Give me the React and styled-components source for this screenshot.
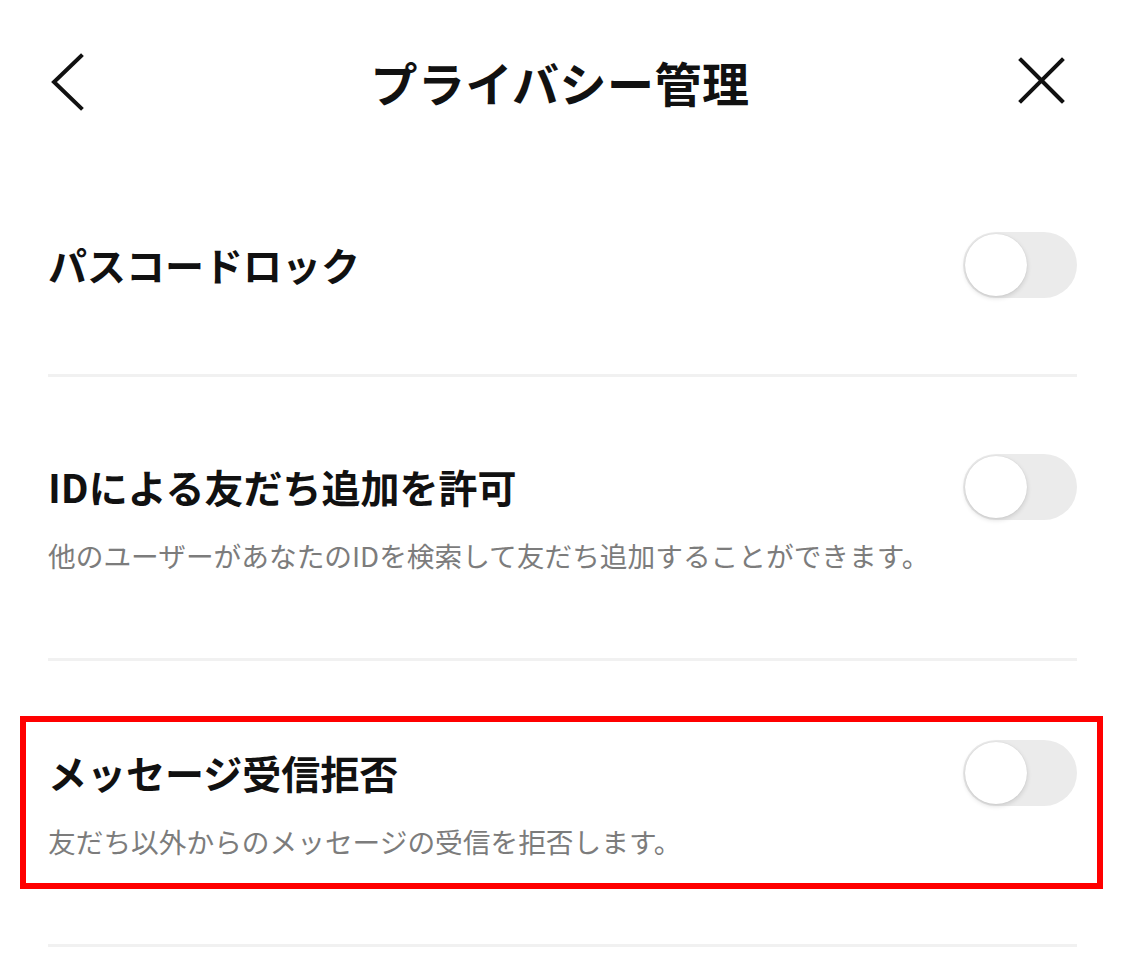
import styled, { createGlobalStyle } from 'styled-components';

const GlobalStyle = createGlobalStyle`
  html, body {
    margin: 0;
    padding: 0;
    background: #ffffff;
  }
  body {
    font-family: "Noto Sans CJK JP", "Noto Sans", sans-serif;
    color: #111111;
  }
`

const settings = [
  { id: 'passcode', title: 'パスコードロック', padTop: 83 },
  {
    id: 'friend-id',
    title: 'IDによる友だち追加を許可',
    desc: '他のユーザーがあなたのIDを検索して友だち追加することができます。',
    padTop: 83,
  },
  {
    id: 'reject',
    title: 'メッセージ受信拒否',
    desc: '友だち以外からのメッセージの受信を拒否します。',
    padTop: 55,
    highlight: true,
  },
];

function App() {
  return (
    <>
      <GlobalStyle />
      <Screen>
        <Header>
          <IconButton aria-label="back" $side="start">
            <svg width="40" height="60" viewBox="0 0 40 60">
              <polyline points="33,5 6,31 33,57" fill="none" stroke="#111" strokeWidth="4" strokeLinecap="square" />
            </svg>
          </IconButton>
          <Title>プライバシー管理</Title>
          <IconButton aria-label="close" $side="end">
            <svg width="50" height="50" viewBox="0 0 50 50">
              <path d="M4 4 L45 45 M45 4 L4 45" stroke="#111" strokeWidth="4" strokeLinecap="square" />
            </svg>
          </IconButton>
        </Header>

        {settings.map((s) => (
          <Row key={s.id} $padTop={s.padTop} $highlight={s.highlight}>
            <RowBody $highlight={s.highlight}>
              <RowHead>
                <RowTitle>{s.title}</RowTitle>
                <Toggle>
                  <Knob />
                </Toggle>
              </RowHead>
              {s.desc && <RowDesc>{s.desc}</RowDesc>}
            </RowBody>
          </Row>
        ))}
      </Screen>
    </>
  );
}

const Screen = styled.div`
  width: 1125px;
  min-height: 971px;
  background: #fff;
  overflow: hidden;
`

const Header = styled.header`
  height: 72px;
  padding: 45px 58px 38px 48px;
  display: grid;
  grid-template-columns: 1fr auto 1fr;
  align-items: center;
`

const IconButton = styled.button`
  border: none;
  background: none;
  padding: 0;
  display: flex;
  align-items: center;
  justify-self: ${({ $side }) => $side};
  cursor: pointer;
`

const Title = styled.h1`
  margin: 0 0 0 5px;
  font-size: 47px;
  font-weight: 700;
  line-height: 1;
  letter-spacing: 0.5px;
  color: #111;
`

const Row = styled.section`
  margin: 0 48px;
  padding: ${({ $padTop, $highlight }) => ($highlight ? '55px 0 55px' : `${$padTop}px 0 83px`)};
  border-bottom: 3px solid #f1f1f1;
`

const RowBody = styled.div`
  display: flex;
  flex-direction: column;
  gap: 23px;
  ${({ $highlight }) =>
    $highlight &&
    `
    margin: 0 -26px 0 -28px;
    padding: 24px 20px 22px 22px;
    border: 6px solid #ff0000;
  `}
`

const RowHead = styled.div`
  display: flex;
  align-items: center;
  justify-content: space-between;
  height: 53px;
`

const RowTitle = styled.h2`
  margin: 0;
  font-size: 39px;
  font-weight: 700;
  line-height: 53px;
  color: #111;
`

const RowDesc = styled.p`
  margin: 0;
  font-size: 27.7px;
  font-weight: 400;
  line-height: 39px;
  color: #7c7c7c;
`

const Toggle = styled.div`
  position: relative;
  width: 114px;
  height: 66px;
  border-radius: 33px;
  background: #ebebeb;
  flex-shrink: 0;
`

const Knob = styled.span`
  position: absolute;
  top: 2px;
  left: 2px;
  width: 62px;
  height: 62px;
  border-radius: 50%;
  background: #fff;
  box-shadow: 0 2px 5px rgba(0, 0, 0, 0.14), 0 0 1px rgba(0, 0, 0, 0.12);
`

export default App;
